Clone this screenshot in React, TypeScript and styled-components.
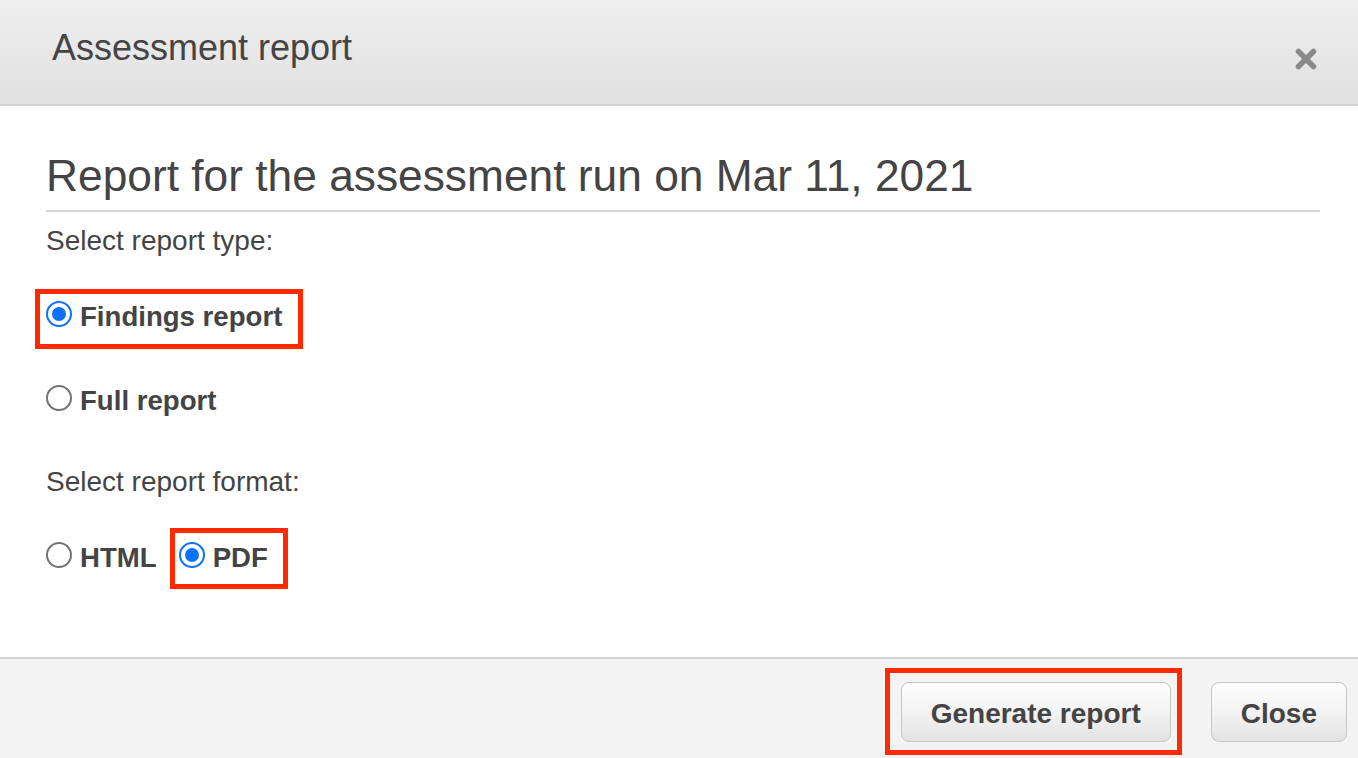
import React from "react";
import styled, { createGlobalStyle } from "styled-components";

const GlobalStyle = createGlobalStyle`
  html, body { margin: 0; padding: 0; background: #ffffff; }
  body { font-family: "Liberation Sans", Arial, Helvetica, sans-serif; color: #444444; }
  * { box-sizing: border-box; }
`;

const Dialog = styled.div`
  width: 1358px;
  height: 758px;
  display: flex;
  flex-direction: column;
  overflow: hidden;
  background: #ffffff;
`;

const Header = styled.header`
  height: 106px;
  flex: none;
  display: flex;
  justify-content: space-between;
  align-items: flex-start;
  padding: 30px 41px 0 52px;
  background: linear-gradient(to bottom, #efefef 0%, #e0e0e0 100%);
  border-bottom: 2px solid #d2d2d2;
`;

const HeaderTitle = styled.h1`
  margin: 0;
  font-size: 36px;
  line-height: 1;
  font-weight: 400;
  color: #444444;
`;

const CloseIcon = styled.button`
  margin-top: 18px;
  width: 22px;
  height: 22px;
  padding: 0;
  border: 0;
  background: transparent;
  display: flex;
  align-items: center;
  justify-content: center;
  cursor: pointer;
`;

const Body = styled.main`
  flex: 1;
  display: flex;
  flex-direction: column;
  padding: 48px 38px 0 46px;
`;

const Heading = styled.h2`
  margin: 0;
  font-size: 44.3px;
  line-height: 1;
  font-weight: 400;
  color: #444444;
  padding-bottom: 12px;
  border-bottom: 2px solid #d4d4d4;
`;

const SectionLabel = styled.div<{ $mt: number }>`
  margin-top: ${(p) => p.$mt}px;
  font-size: 28px;
  line-height: 1;
  color: #444444;
`;

const OptionLine = styled.div<{ $mt: number }>`
  margin-top: ${(p) => p.$mt}px;
  display: flex;
  align-items: flex-start;
  gap: 22px;
`;

const Option = styled.label`
  display: inline-flex;
  align-items: flex-start;
  gap: 8px;
  font-size: 27.6px;
  line-height: 1;
  font-weight: 700;
  color: #444444;
  cursor: pointer;
  padding-top: 2px;
`;

const RadioCircle = styled.span<{ $checked?: boolean }>`
  position: relative;
  width: 26px;
  height: 26px;
  margin-top: -2px;
  flex: none;
  border-radius: 50%;
  background: #ffffff;
  border: 2px solid ${(p) => (p.$checked ? "#0b72ff" : "#737373")};
  &::after {
    content: "";
    display: ${(p) => (p.$checked ? "block" : "none")};
    position: absolute;
    left: 4px;
    top: 4px;
    width: 14px;
    height: 14px;
    border-radius: 50%;
    background: #0b72ff;
  }
`;

const Highlight = styled.div<{ $t: number; $r: number; $b: number; $l: number }>`
  display: inline-flex;
  border: 5px solid #ff2a00;
  margin: ${(p) => `-${p.$t + 5}px -${p.$r + 5}px -${p.$b + 5}px -${p.$l + 5}px`};
  padding: ${(p) => `${p.$t}px ${p.$r}px ${p.$b}px ${p.$l}px`};
  align-self: flex-start;
`;

const Footer = styled.footer`
  height: 101px;
  flex: none;
  display: flex;
  justify-content: flex-end;
  align-items: flex-start;
  gap: 40px;
  padding: 23px 11px 0 0;
  background: #f4f4f4;
  border-top: 2px solid #d4d4d4;
`;

const Button = styled.button`
  height: 60px;
  padding: 3px 29px 0;
  border: 1.5px solid #c6c6c6;
  border-radius: 8px;
  background: linear-gradient(to bottom, #fefefe 0%, #f3f3f3 50%, #e3e3e3 100%);
  font-family: "Liberation Sans", Arial, Helvetica, sans-serif;
  font-size: 28px;
  font-weight: 700;
  color: #444444;
  cursor: pointer;
`;

function Radio({ checked, label }: { checked?: boolean; label: string }) {
  return (
    <Option>
      <RadioCircle $checked={checked} />
      <span>{label}</span>
    </Option>
  );
}

export default function App() {
  return (
    <>
      <GlobalStyle />
      <Dialog>
        <Header>
          <HeaderTitle>Assessment report</HeaderTitle>
          <CloseIcon aria-label="Close">
            <svg width="22" height="22" viewBox="0 0 22 22">
              <path d="M3.5 3.5 L18.5 18.5 M18.5 3.5 L3.5 18.5" stroke="#8a8a8a" strokeWidth="5.5" strokeLinecap="round" />
            </svg>
          </CloseIcon>
        </Header>
        <Body>
          <Heading>Report for the assessment run on Mar 11, 2021</Heading>
          <SectionLabel $mt={15}>Select report type:</SectionLabel>
          <OptionLine $mt={46}>
            <Highlight $t={7} $r={16} $b={13} $l={6}>
              <Radio checked label="Findings report" />
            </Highlight>
          </OptionLine>
          <OptionLine $mt={54}>
            <Radio label="Full report" />
          </OptionLine>
          <SectionLabel $mt={54}>Select report format:</SectionLabel>
          <OptionLine $mt={46}>
            <Radio label="HTML" />
            <Highlight $t={9} $r={15} $b={12} $l={4}>
              <Radio checked label="PDF" />
            </Highlight>
          </OptionLine>
        </Body>
        <Footer>
          <Highlight $t={9} $r={6} $b={8} $l={11}>
            <Button>Generate report</Button>
          </Highlight>
          <Button>Close</Button>
        </Footer>
      </Dialog>
    </>
  );
}
